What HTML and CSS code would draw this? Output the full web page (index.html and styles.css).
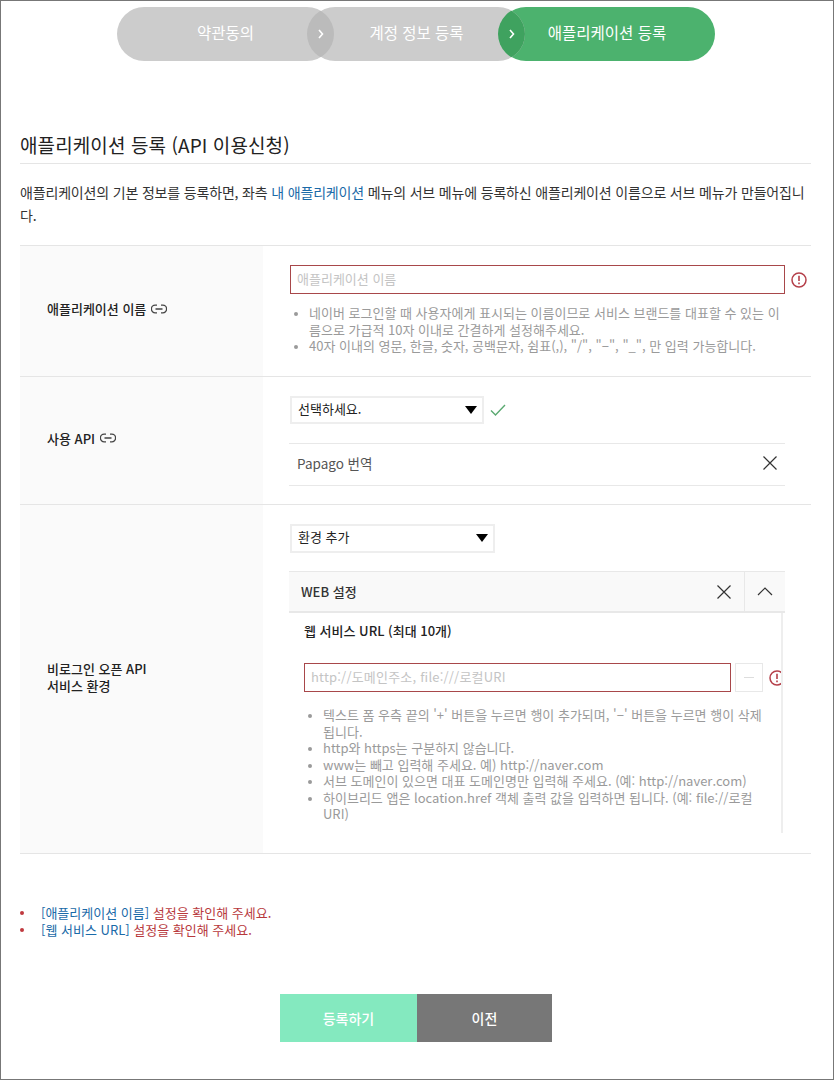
FILE: index.html
```html
<!DOCTYPE html>
<html lang="ko">
<head>
  <meta charset="UTF-8">
  <title>애플리케이션 등록</title>
  <link rel="stylesheet" href="styles.css">
</head>
<body>
  <div class="page">
    <ol class="steps">
      <li class="step step-first">약관동의<span class="lens"></span><svg class="chev" width="6" height="10" viewBox="0 0 6 10"><path d="M1 1l3.500 4L1 9" fill="none" stroke="#fff" stroke-width="1.6"/></svg></li>
      <li class="step step-second">계정 정보 등록<span class="lens lens-green"></span><svg class="chev" width="6" height="10" viewBox="0 0 6 10"><path d="M1 1l3.500 4L1 9" fill="none" stroke="#fff" stroke-width="1.6"/></svg></li>
      <li class="step step-on">애플리케이션 등록</li>
    </ol>

    <h1 class="title">애플리케이션 등록 (API 이용신청)</h1>
    <p class="intro">애플리케이션의 기본 정보를 등록하면, 좌측 <a href="#">내 애플리케이션</a> 메뉴의 서브 메뉴에 등록하신 애플리케이션 이름으로 서브 메뉴가 만들어집니다.</p>

    <div class="form">
      <div class="row row-name">
        <div class="label">애플리케이션 이름
          <svg class="link-icon" width="16" height="10" viewBox="0 0 16 10"><path d="M6 1.200H4.200a3.800 3.800 0 0 0 0 7.600H6M10 1.200h1.800a3.800 3.800 0 0 1 0 7.600H10M4.500 5h7" fill="none" stroke="#444" stroke-width="1.300"/></svg>
        </div>
        <div class="cell">
          <div class="field-line">
            <input class="text-input invalid name-input" type="text" placeholder="애플리케이션 이름">
            <svg class="err-icon" width="16" height="16" viewBox="0 0 16 16"><circle cx="8" cy="8" r="7" fill="none" stroke="#b5404a" stroke-width="1.500"/><path d="M8 3.800v5.200M8 10.400v1.800" stroke="#b5404a" stroke-width="1.600"/></svg>
          </div>
          <ul class="hints">
            <li>네이버 로그인할 때 사용자에게 표시되는 이름이므로 서비스 브랜드를 대표할 수 있는 이름으로 가급적 10자 이내로 간결하게 설정해주세요.</li>
            <li>40자 이내의 영문, 한글, 숫자, 공백문자, 쉼표(,), "/", "−", "_", 만 입력 가능합니다.</li>
          </ul>
        </div>
      </div>

      <div class="row row-api">
        <div class="label">사용 API
          <svg class="link-icon" width="16" height="10" viewBox="0 0 16 10"><path d="M6 1.200H4.200a3.800 3.800 0 0 0 0 7.600H6M10 1.200h1.800a3.800 3.800 0 0 1 0 7.600H10M4.500 5h7" fill="none" stroke="#444" stroke-width="1.300"/></svg>
        </div>
        <div class="cell">
          <div class="field-line">
            <div class="select select-api">선택하세요.<span class="arrow"></span></div>
            <svg class="ok-icon" width="16" height="12" viewBox="0 0 16 12"><path d="M1 6.500l4.500 4.500L15 1" fill="none" stroke="#5aa971" stroke-width="1.400"/></svg>
          </div>
          <div class="api-item">Papago 번역
            <svg class="x-icon" width="14" height="14" viewBox="0 0 14 14"><path d="M.5.5l13 13M13.500.5l-13 13" stroke="#333" stroke-width="1.200"/></svg>
          </div>
        </div>
      </div>

      <div class="row row-env">
        <div class="label">비로그인 오픈 API<br>서비스 환경</div>
        <div class="cell">
          <div class="select select-env">환경 추가<span class="arrow"></span></div>
          <div class="panel-head">
            <span class="panel-name">WEB 설정</span>
            <button class="panel-btn" type="button"><svg class="x-icon" width="14" height="14" viewBox="0 0 14 14"><path d="M.5.5l13 13M13.500.5l-13 13" stroke="#333" stroke-width="1.200"/></svg></button>
            <button class="panel-btn panel-btn-up" type="button"><svg width="16" height="9" viewBox="0 0 16 9"><path d="M1 8l7-7 7 7" fill="none" stroke="#333" stroke-width="1.200"/></svg></button>
          </div>
          <div class="panel-body">
            <h2 class="panel-title">웹 서비스 URL (최대 10개)</h2>
            <div class="url-line">
              <input class="text-input invalid url-input" type="text" placeholder="http://도메인주소, file:///로컬URI">
              <button class="minus-btn" type="button"><span></span></button>
              <svg class="err-icon" width="16" height="16" viewBox="0 0 16 16"><circle cx="8" cy="8" r="7" fill="none" stroke="#b5404a" stroke-width="1.500"/><path d="M8 3.800v5.200M8 10.400v1.800" stroke="#b5404a" stroke-width="1.600"/></svg>
            </div>
            <ul class="hints hints-url">
              <li>텍스트 폼 우측 끝의 '+' 버튼을 누르면 행이 추가되며, '−' 버튼을 누르면 행이 삭제됩니다.</li>
              <li>http와 https는 구분하지 않습니다.</li>
              <li>www는 빼고 입력해 주세요. 예) http://naver.com</li>
              <li>서브 도메인이 있으면 대표 도메인명만 입력해 주세요. (예: http://naver.com)</li>
              <li>하이브리드 앱은 location.href 객체 출력 값을 입력하면 됩니다. (예: file://로컬 URI)</li>
            </ul>
          </div>
        </div>
      </div>
    </div>

    <ul class="errors">
      <li><a href="#">[애플리케이션 이름]</a> 설정을 확인해 주세요.</li>
      <li><a href="#">[웹 서비스 URL]</a> 설정을 확인해 주세요.</li>
    </ul>

    <div class="actions">
      <button class="btn btn-submit" type="button">등록하기</button>
      <button class="btn btn-prev" type="button">이전</button>
    </div>
  </div>
</body>
</html>
```

FILE: styles.css
```css
* {
  box-sizing: border-box;
}
body {
  margin: 0;
  font-family: "Noto Sans CJK KR", "Noto Sans", sans-serif;
  font-size: 13px;
  color: #333;
}
a {
  text-decoration: none;
  color: #1a6aa8;
}
.page {
  width: 834px;
  height: 1080px;
  padding: 6px 22px 0 19px;
  border: 1px solid #777;
  overflow: hidden;
}

/* steps */
.steps {
  display: flex;
  list-style: none;
  margin: 0 0 0 97px;
  padding: 0;
}
.step {
  position: relative;
  width: 217px;
  height: 54px;
  line-height: 51px;
  margin-right: -26px;
  border-radius: 27px;
  overflow: hidden;
  text-align: center;
  color: #fff;
  font-size: 15.5px;
  background-color: #ccc;
}
.step-first {
  z-index: 3;
}
.step-second {
  z-index: 2;
}
.step-on {
  z-index: 1;
  width: 216px;
  background-color: #4cb26e;
}
.lens {
  position: absolute;
  top: 0;
  left: 190px;
  width: 54px;
  height: 54px;
  border-radius: 50%;
  background-color: #bbb;
}
.lens-green {
  background-color: #3fa25f;
}
.chev {
  position: absolute;
  top: 22px;
  left: 201px;
}

/* heading */
.title {
  margin: 69px 0 0;
  height: 34px;
  border-bottom: 1px solid #e5e5e5;
  font-size: 19px;
  letter-spacing: 0.1px;
  line-height: 30px;
  font-weight: 400;
  color: #222;
}
.intro {
  margin: 17px 0 18px;
  font-size: 14px;
  letter-spacing: -0.17px;
  line-height: 23px;
  color: #333;
}

/* form table */
.form {
  border-top: 1px solid #e5e5e5;
}
.row {
  display: grid;
  grid-template-columns: 243px 1fr;
  border-bottom: 1px solid #e5e5e5;
}
.row-name {
  height: 131px;
}
.row-api {
  height: 128px;
}
.row-env {
  height: 349px;
}
.label {
  display: flex;
  align-items: center;
  flex-wrap: wrap;
  align-content: center;
  gap: 0 5px;
  padding: 0 0 5px 27px;
  background-color: #fafafa;
  font-size: 13px;
  line-height: 17px;
  font-weight: 500;
  color: #222;
}
.cell {
  padding: 19px 26px 0 27px;
}
.field-line {
  display: flex;
  align-items: center;
  gap: 6px;
}
.text-input {
  height: 29px;
  padding: 0 6px 2px;
  font-family: inherit;
  font-size: 13px;
  outline: none;
}
.text-input::placeholder {
  color: #c4c4c4;
  opacity: 1;
}
.invalid {
  border: 1px solid #a8474a;
}
.name-input {
  width: 495px;
}
.err-icon {
  flex-shrink: 0;
}
.hints {
  margin: 11px 26px 0 0;
  padding: 0 0 0 19px;
  font-size: 13px;
  line-height: 16.5px;
  color: #9a9a9a;
}
.hints li::marker {
  font-size: 11px;
}

/* selects */
.select {
  position: relative;
  height: 29px;
  padding-left: 6px;
  border: 2px solid #eee;
  font-size: 13px;
  line-height: 22px;
  color: #222;
}
.select-api {
  width: 194px;
  height: 28px;
}
.select-env {
  width: 205px;
}
.arrow {
  position: absolute;
  top: 8px;
  right: 5px;
  border-style: solid;
  border-width: 8px 6px 0;
  border-color: #000 transparent transparent;
}
.api-item {
  display: flex;
  justify-content: space-between;
  align-items: center;
  height: 43px;
  margin: 19px 0 0 -1px;
  padding: 0 8px 4px;
  border-top: 1px solid #e8e8e8;
  border-bottom: 1px solid #e8e8e8;
  font-size: 13.5px;
  color: #555;
}

/* web panel */
.panel-head {
  display: flex;
  align-items: center;
  height: 42px;
  margin: 18px 0 0 -1px;
  border-top: 1px solid #e8e8e8;
  border-bottom: 2px solid #e8e8e8;
  background-color: #f9f9f9;
}
.panel-name {
  flex: 1;
  padding-left: 12px;
  font-size: 13px;
  font-weight: 500;
  color: #333;
}
.panel-btn {
  display: flex;
  align-items: center;
  justify-content: center;
  width: 40px;
  height: 100%;
  padding: 0;
  border: 0;
  background: none;
}
.panel-btn-up {
  width: 41px;
  border-left: 1px solid #e8e8e8;
}
.panel-body {
  height: 220px;
  width: 494px;
  margin-left: -1px;
  padding: 9px 0 0 15px;
  border-right: 2px solid #eee;
  overflow: hidden;
}
.panel-title {
  margin: 0 0 24px;
  font-size: 13px;
  line-height: 17px;
  font-weight: 500;
  color: #222;
}
.url-line {
  display: flex;
  align-items: center;
}
.url-input {
  flex: none;
  width: 427px;
  letter-spacing: 0.2px;
}
.minus-btn {
  flex: none;
  display: flex;
  align-items: center;
  justify-content: center;
  width: 28px;
  height: 29px;
  margin-left: 4px;
  padding: 0;
  border: 1px solid #e8e8e8;
  background: #fff;
}
.minus-btn span {
  width: 10px;
  height: 1px;
  background-color: #ddd;
}
.url-line .err-icon {
  margin-left: 6px;
}
.hints-url {
  margin: 15px 12px 0 0;
  padding-left: 19px;
}

/* errors */
.errors {
  list-style: none;
  margin: 50px 0 0;
  padding: 0 0 0 21px;
  color: #b8393d;
  font-size: 13px;
  line-height: 17px;
}
.errors li {
  position: relative;
}
.errors li::before {
  content: "";
  position: absolute;
  top: 7px;
  left: -21px;
  width: 4px;
  height: 4px;
  border-radius: 50%;
  background-color: #c0393f;
}

/* buttons */
.actions {
  display: flex;
  margin: 56px 0 0 260px;
}
.btn {
  height: 48px;
  padding: 0;
  border: 0;
  color: #fff;
  font-family: inherit;
  font-size: 14px;
  font-weight: 500;
}
.btn-submit {
  width: 137px;
  background-color: #84e9bf;
}
.btn-prev {
  width: 135px;
  background-color: #777;
}
```
